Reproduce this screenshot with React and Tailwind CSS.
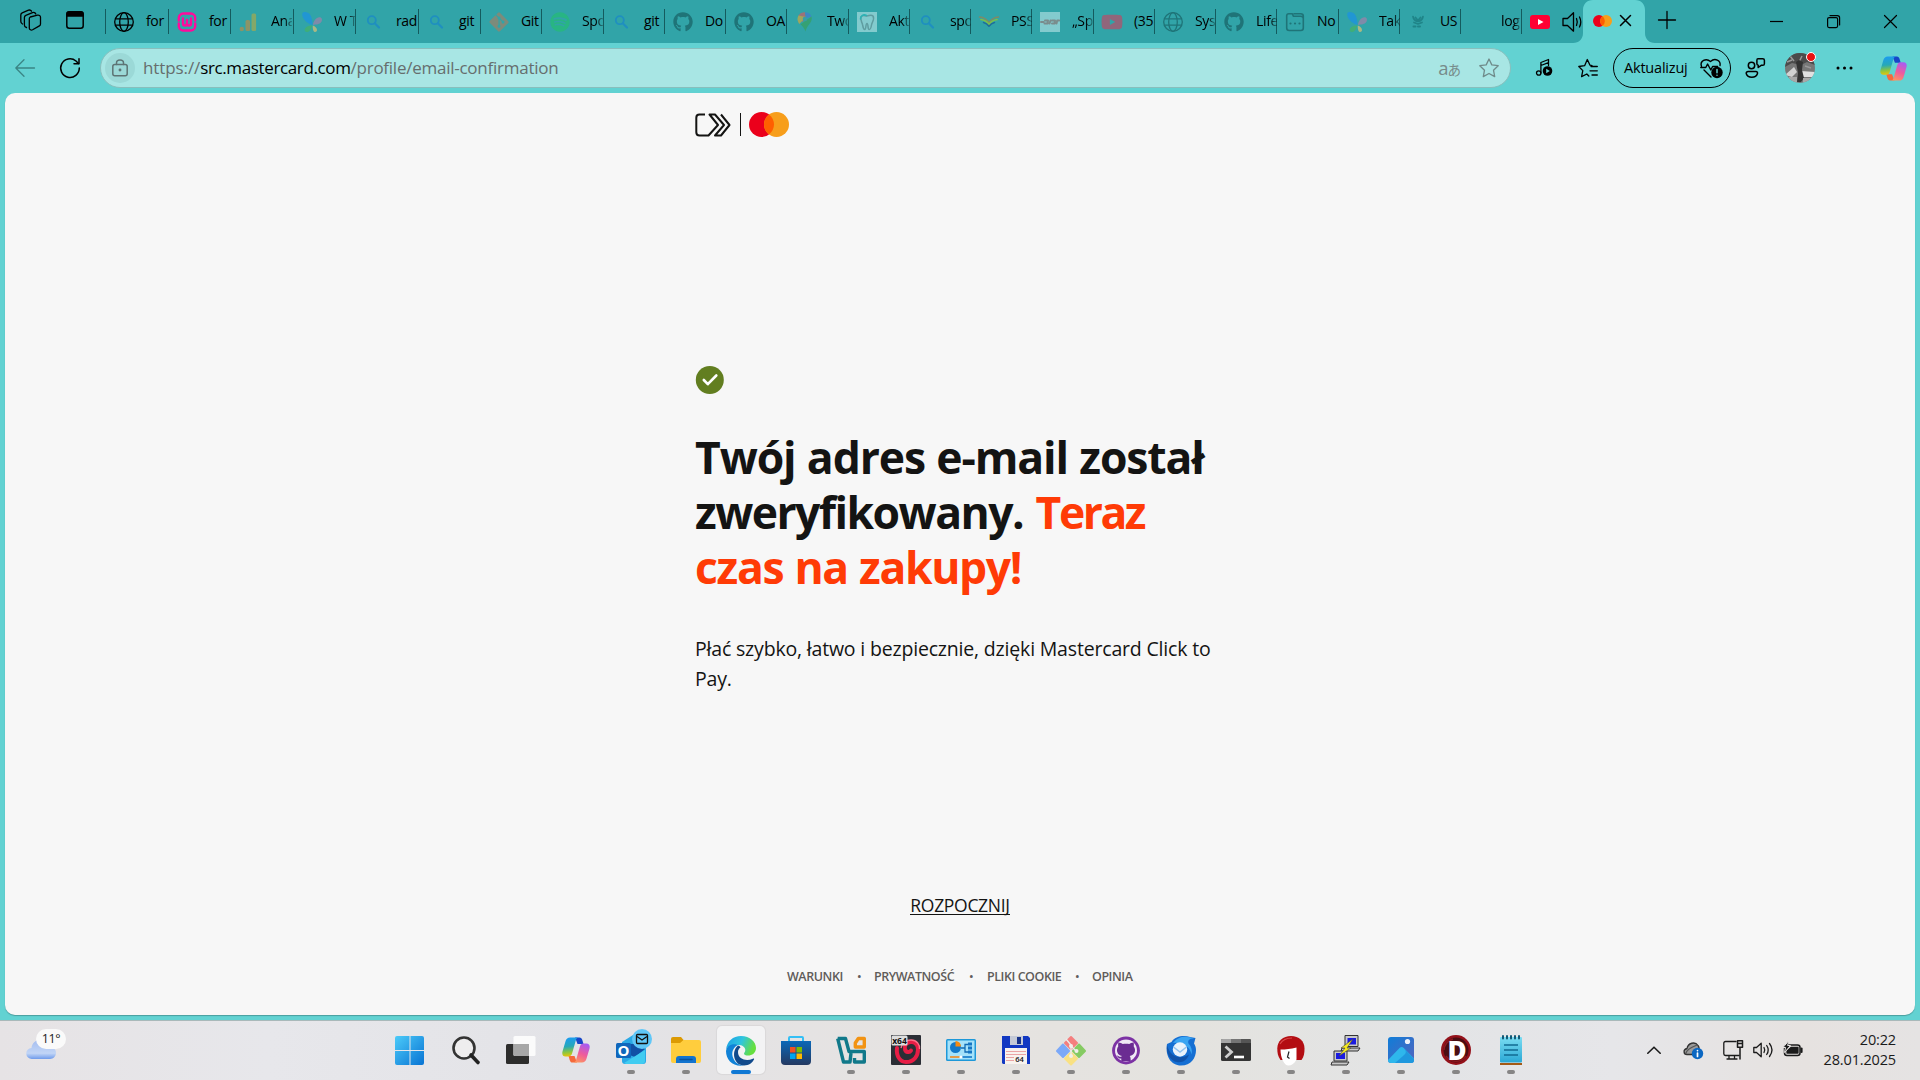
import React from "react";
import { FaGithub, FaGitAlt, FaSpotify, FaYoutube } from "react-icons/fa";

const SEGOE = "font-['Segoe_UI','Open_Sans','Noto_Sans_CJK_JP',sans-serif]";

function Svg({ w = 20, h = 20, vb, className = "", children }) {
  return (
    <svg
      width={w}
      height={h}
      viewBox={vb || `0 0 ${w} ${h}`}
      fill="none"
      stroke="currentColor"
      strokeWidth="1.3"
      strokeLinecap="round"
      strokeLinejoin="round"
      className={`shrink-0 overflow-visible ${className}`}
    >
      {children}
    </svg>
  );
}

/* ---------- favicons ---------- */

const Globe = ({ className }) => (
  <Svg className={className}>
    <circle cx="10" cy="10" r="9.3" />
    <ellipse cx="10" cy="10" rx="4.3" ry="9.3" />
    <path d="M1.5 6.8h17M1.5 13.2h17" />
  </Svg>
);

const Wamp = () => (
  <Svg>
    <g stroke="#ff0a9c" strokeWidth="2.400">
      <path d="M1.800 8.500V6a4.500 4.500 0 0 1 4.500-4.500h7.400A4.500 4.500 0 0 1 18.200 6v2.500M18.200 11.500V14a4.500 4.500 0 0 1-4.500 4.500H6.300A4.500 4.500 0 0 1 1.800 14v-2.500" />
      <path d="M6 6.500v5a2 2 0 0 0 4 0V8v3.500a2 2 0 0 0 4 0v-5" />
    </g>
  </Svg>
);

const Analytics = () => (
  <Svg>
    <g stroke="none">
      <rect x="12.500" y="1.500" width="4.600" height="17.500" rx="1.500" fill="#84a868" />
      <rect x="6.500" y="8" width="4.600" height="11" rx="1.500" fill="#8d9467" />
      <circle cx="2.800" cy="17" r="2.200" fill="#8d9467" />
    </g>
  </Svg>
);

const Butterfly = () => (
  <Svg>
    <g stroke="none">
      <path d="M10.500 13C4 11.500-.5 5.500.3 1.600.9-.7 6-.4 8.300 3c1.800 2.800 2.200 7 2.200 10z" fill="#2196d3" />
      <path d="M11 13c.2-4 3.200-7.600 6.300-7.800 2.700-.1 3.400 2.500 2 4.800-1.600 2.400-5 2.400-8.300 3z" fill="#7f8ba9" />
      <path d="M10.200 13.500c-3 .2-6.200 1-7.300 3.300-.9 2 .3 3.500 2.400 3.200 2.700-.4 4.300-3.600 4.900-6.500z" fill="#3fae78" />
      <path d="M10.800 13.500c2.400.8 4.400 2.800 4.200 4.800-.2 1.700-2 2.200-3.100 1.100-1.200-1.300-1.200-3.700-1.100-5.900z" fill="#a9b883" />
    </g>
  </Svg>
);

const Search = () => (
  <Svg className="text-[#1f8fc0]">
    <circle cx="7.800" cy="8.200" r="4" strokeWidth="1.800" />
    <path d="m11 11.500 4 4" strokeWidth="2.200" />
  </Svg>
);

const Pin = () => (
  <Svg>
    <g stroke="none">
      <path d="M3.500 3.500A7.500 7.500 0 0 1 10 .2l1 5.800-3.500 4z" fill="#9b7379" />
      <path d="M10 .2c3 0 5.500 1.500 6.500 4.300L11 6.500z" fill="#3d87c4" />
      <path d="M3.500 3.500c-1.800 3-.9 6.200.8 8.500L11 5z" fill="#9fa65d" />
      <path d="M16.500 4.500c1.500 6.500-4.500 7.500-6 15-1-3-2.500-5-5-7.300z" fill="#35a174" />
      <circle cx="10" cy="7" r="2.300" fill="#379ea5" />
    </g>
  </Svg>
);

const Tooth = () => (
  <Svg>
    <rect width="20" height="20" fill="#83cbce" stroke="none" />
    <path d="M4 5c2-3 4-1 6-1s4-2 6 0c2 3-1 6-1.500 9-.4 2.500-1 4.500-2.300 4.500-1.700 0-.7-6-2.200-6s-.7 6-2.200 6C6 17.500 6 14 5.500 12.500 5 10 3 8 4 5z" stroke="#5f9da0" strokeWidth="1.500" />
    <path d="M3.500 7c0-3.500 3-5 6-3.500" stroke="#2bb3b5" strokeWidth="1.600" />
  </Svg>
);

const Wings = () => (
  <Svg>
    <path d="M.6 5c3.500.3 7 2 9.400 6C12.400 7 16 5.300 19.400 5" stroke="#7d8b68" strokeWidth="1.700" />
    <path d="M2 7.500c3.500.5 6.200 2.300 8 5 1.800-2.700 4.500-4.500 8-5" stroke="#79c04a" strokeWidth="1.700" />
    <path d="M4.500 10.500c2.500.7 4.200 2 5.500 3.700 1.300-1.700 3-3 5.500-3.700" stroke="#1f6f9a" strokeWidth="1.500" />
  </Svg>
);

const GreyLogo = () => (
  <Svg>
    <rect width="20" height="20" fill="#83cbce" stroke="none" />
    <path d="M1 10h2.500M5 8.500h3l-.5 3h-3M9.500 11.500l1-3M12 8.500h3l-.5 3h-2.500M16.500 11.500l.7-3h2" stroke="#7a8c8c" strokeWidth="2" />
  </Svg>
);

const BoxPage = () => (
  <Svg className="text-[#1f7478]">
    <path d="M3.800 1.700h3.400l1.300 2.600h7.300c1.400 0 2.500.9 2.500 2.300v9.500c0 1.400-1 2.400-2.500 2.400H4.200c-1.400 0-2.500-1-2.500-2.400V3.800c0-1.200.9-2.100 2.100-2.100zM9 1.700h6.800c1.400 0 2.500.9 2.500 2.300v3" strokeWidth="1.600" />
    <path d="M5.500 11.500h.01M10 11.500h.01M14.500 11.500h.01" strokeWidth="2.200" />
  </Svg>
);

const Crest = () => (
  <Svg className="text-[#1f8488]">
    <path d="M5 4.500c.5 3 2.500 4.500 5 5 2.500-.5 4.500-2 5-5M7.500 5.500 10 8.500l2.500-3M6 10.500l4 1.500 4-1.500" strokeWidth="1.700" />
    <path d="M5.500 14.500h9" strokeWidth="2" strokeDasharray="2 2.500" />
  </Svg>
);

const Cards = ({ w, h }) => (
  <Svg w={w} h={h} vb="0 0 40 25">
    <g stroke="none">
      <circle cx="12.500" cy="12.500" r="12.500" fill="#eb001b" />
      <circle cx="27.500" cy="12.500" r="12.500" fill="#f79e1b" />
      <path d="M20 2.500a12.500 12.500 0 0 1 0 20 12.500 12.500 0 0 1 0-20z" fill="#ff5f00" />
    </g>
  </Svg>
);

const dim = "shrink-0 text-[#1f7478]";
const TABS = [
  ["w-[63px]", <Globe />, "for", false],
  ["w-[62px]", <Wamp />, "for", false],
  ["w-[63px]", <Analytics />, "Ana", true],
  ["w-[62px]", <Butterfly />, "W T", true],
  ["w-[63px]", <Search />, "rad", false],
  ["w-[62px]", <Search />, "git", false],
  ["w-[61px]", <FaGitAlt size={22} className="-mx-px shrink-0 text-[#7d8b7b]" />, "Git", false],
  ["w-[62px]", <FaSpotify size={20} className="shrink-0 text-[#28b583]" />, "Spo", true],
  ["w-[61px]", <Search />, "git", false],
  ["w-[61px]", <FaGithub size={20} className={dim} />, "Do", false],
  ["w-[61px]", <FaGithub size={20} className={dim} />, "OA", false],
  ["w-[62px]", <Pin />, "Two", true],
  ["w-[61px]", <Tooth />, "Akt", true],
  ["w-[61px]", <Search />, "spo", true],
  ["w-[61px]", <Wings />, "PSS", true],
  ["w-[62px]", <GreyLogo />, "„Sp", true],
  ["w-[61px]", <FaYoutube size={22} className="-mx-px shrink-0 text-[#90667b]" />, "(35", false],
  ["w-[61px]", <Globe className="text-[#1f7478]" />, "Sys", true],
  ["w-[61px]", <FaGithub size={20} className={dim} />, "Life", true],
  ["w-[62px]", <BoxPage />, "No", false],
  ["w-[61px]", <Butterfly />, "Tak", true],
  ["w-[61px]", <Crest />, "US", false],
  ["w-[61px]", <span className="w-5 shrink-0" />, "log", true],
];

function Tab({ width, icon, label, fade }) {
  return (
    <div className={`flex h-[25px] shrink-0 items-center border-l border-[#145b5e] pl-2 ${width}`}>
      {icon}
      <span
        className={`-mt-[2px] ml-3 w-[21px] text-[14px] leading-[25px] tracking-[-0.35px] whitespace-nowrap ${
          fade ? "[mask-image:linear-gradient(to_right,black_65%,transparent_110%)]" : ""
        }`}
      >
        {label}
      </span>
    </div>
  );
}

function TabStrip() {
  return (
    <div className="flex h-[43px] items-start bg-[#31a4a8] text-black">
      <div className="flex h-10 w-[105px] shrink-0 items-center pl-5">
        <Svg w={22} h={22}>
          <path d="M10.200 7.500 17.500 5.700c1.500-.4 3 .6 3 2.100v6.700c0 .8-.4 1.500-1.100 1.900l-6.800 3.900c-1.500.8-3.300-.2-3.300-1.900V9.200c0-.8.300-1.400.9-1.700z" transform="translate(0 .5)" />
          <path d="M6.500 18.500c-1.400-.3-2.100-1.200-2.100-2.600V8.500c0-1 .5-1.800 1.400-2.200L12.500 3.600c1.400-.5 2.800 0 3.300 1.400" />
          <path d="M2.500 15C1.500 14.500.8 13.500.8 12.200V6c0-1 .5-1.800 1.400-2.200L8.500 1.200c1.200-.4 2.400 0 3 1" />
        </Svg>
        <Svg w={18} h={18} className="ml-6">
          <rect x=".8" y=".8" width="16.400" height="16.400" rx="2.500" strokeWidth="1.500" />
          <path d="M1 5V3a2 2 0 0 1 2-2h12a2 2 0 0 1 2 2v2z" fill="currentColor" />
        </Svg>
      </div>
      <div className="flex h-[43px] shrink-0 items-start pt-[9px]">
        {TABS.map(([width, icon, label, fade], i) => (
          <Tab key={i} width={width} icon={icon} label={label} fade={fade} />
        ))}
        <div className="flex h-[25px] w-[62px] items-center border-l border-[#145b5e] pl-[7px]">
          <Svg w={22} h={22}>
            <rect x="1" y="4" width="20" height="14" rx="3" fill="#ff0033" stroke="none" />
            <path d="m9 8 5.500 3L9 14z" fill="white" stroke="none" />
          </Svg>
          <Svg w={20} h={20} className="ml-[11px]">
            <path d="M1 6.500h4.500L11.500.8v18.400l-6-5.700H1z" />
            <path d="M14.500 6.500c1 2.300 1 4.700 0 7M17.500 5c1.700 3.300 1.700 6.700 0 10" />
          </Svg>
        </div>
      </div>
      <div className="relative flex h-[43px] w-[62px] shrink-0 items-start text-black">
        <svg width="82" height="43" viewBox="0 0 82 43" className="absolute top-0 -left-[10px]">
          <path d="M0 43c6 0 10-4 10-10V10C10 4 14 0 20 0h42c6 0 10 4 10 10v23c0 6 4 10 10 10z" fill="#62d2d2" />
        </svg>
        <div className="relative flex h-[41px] items-center pl-[10px]">
          <Cards w={19} h={12} />
          <Svg w={11} h={11} className="ml-2">
            <path d="m.5.5 10 10M10.500.5l-10 10" strokeWidth="1.500" />
          </Svg>
        </div>
      </div>
      <div className="flex h-[39px] flex-1 items-center pl-[13px]">
        <Svg w={18} h={18}>
          <path d="M9 .5v17M.5 9h17" />
        </Svg>
        <div className="mt-[3px] ml-auto flex items-center gap-[44px] pr-[23px]">
          <Svg w={13} h={13}>
            <path d="M0 6.500h13" strokeWidth="1.200" strokeLinecap="butt" />
          </Svg>
          <Svg w={13} h={13}>
            <rect x=".6" y="2.600" width="10" height="10" rx="1.500" strokeWidth="1.200" />
            <path d="M3 .6h7.400c1.200 0 2.200 1 2.200 2.200V10" strokeWidth="1.200" />
          </Svg>
          <Svg w={13} h={13}>
            <path d="m.5.5 12 12M12.500.5l-12 12" strokeWidth="1.200" />
          </Svg>
        </div>
      </div>
    </div>
  );
}

/* ---------- toolbar ---------- */

function CopilotLogo({ size, id }) {
  return (
    <svg width={size} height={size} viewBox="0 0 28 28" className="shrink-0">
      <defs>
        <linearGradient id={`${id}a`} x1="4" y1="2" x2="6" y2="21" gradientUnits="userSpaceOnUse">
          <stop offset="0" stopColor="#1b9cf0" />
          <stop offset=".45" stopColor="#26a8b8" />
          <stop offset=".75" stopColor="#8cc63f" />
          <stop offset="1" stopColor="#f5c400" />
        </linearGradient>
        <linearGradient id={`${id}b`} x1="23" y1="8" x2="15" y2="27" gradientUnits="userSpaceOnUse">
          <stop offset="0" stopColor="#a95cf0" />
          <stop offset=".5" stopColor="#ee5c9c" />
          <stop offset="1" stopColor="#ff9a5c" />
        </linearGradient>
      </defs>
      <path d="M13 1.500h4.500c1.600 0 2.300 1 2.800 2.600L21.500 8h-6z" fill="#1746c8" />
      <path d="M15 26.500h-4.500c-1.600 0-2.300-1-2.800-2.600L6.500 20h6z" fill="#f56a3c" />
      <path d="M8 1.500h8.500c-1.500.3-2.200 1.300-2.700 3l-3.600 12.600c-.6 2.200-1.700 3.400-4 3.400H3.500C.8 20.500-.2 18.300.5 15.500L3.600 5C4.300 2.800 5.700 1.500 8 1.500z" fill={`url(#${id}a)`} />
      <path d="M20 26.500h-8.500c1.500-.3 2.200-1.300 2.700-3l3.600-12.600c.6-2.200 1.700-3.400 4-3.400h2.700c2.700 0 3.700 2.200 3 5L24.400 23c-.7 2.200-2.100 3.500-4.400 3.500z" fill={`url(#${id}b)`} />
    </svg>
  );
}

function Avatar() {
  return (
    <div className="relative ml-5 h-[30px] w-[30px] shrink-0">
      <svg width="30" height="30" viewBox="0 0 30 30">
        <clipPath id="av"><circle cx="15" cy="15" r="15" /></clipPath>
        <g clipPath="url(#av)">
          <rect width="30" height="30" fill="#777" />
          <path d="M0 0h30v12l-8-3-6 3-9-2-7 4z" fill="#4b4b4b" />
          <path d="M5 3l4 5M2 9l5-2M17 3l-3 6M20 13l6 2" stroke="#999" strokeWidth="1.500" />
          <path d="M0 22l9-8 3 5-5 5z" fill="#d2d2d2" />
          <path d="M16 18l14 1v5H18z" fill="#e0e0e0" />
          <path d="M11 9l3-2 4 2-1 8 2 8-3 4h-4l1-9z" fill="#333" />
          <path d="M4 24h8v6H4zM18 25h9v5h-9z" fill="#a9a9a9" />
        </g>
      </svg>
      <span className="absolute -top-px right-[-1px] h-[10px] w-[10px] rounded-full border border-white bg-[#e81010]" />
    </div>
  );
}

function Toolbar() {
  return (
    <div className="flex h-[50px] items-center bg-[#62d2d2] text-black">
      <Svg w={20} h={18} className="ml-[15px] text-[#3a8585]">
        <path d="M19.500 9H.8M9 .8.8 9 9 17.200" />
      </Svg>
      <Svg className="ml-[25px]">
        <path d="M19.300 10A9.300 9.300 0 1 1 16 3l2.500 2.500" strokeWidth="1.500" />
        <path d="M19 .7v5h-5" strokeWidth="1.500" />
      </Svg>
      <div className="ml-5 flex h-10 w-[1411px] shrink-0 items-center rounded-full border border-[#88bfbd] bg-[#a8e6e4] pl-1 text-[#666e6e]">
        <span className="flex h-[30px] w-[30px] shrink-0 items-center justify-center rounded-full bg-[#9bd9d7]">
          <Svg w={16} h={18} className="text-[#5d7474]">
            <rect x=".8" y="5.500" width="14.400" height="11.300" rx="2" strokeWidth="1.500" />
            <path d="M4.500 5.500V4c0-4 7-4 7 0v1.500" strokeWidth="1.500" />
            <circle cx="8" cy="11" r=".8" fill="currentColor" />
          </Svg>
        </span>
        <span className="ml-2 text-[17px] leading-[30px] tracking-[-0.31px] whitespace-nowrap">
          <span className="tracking-[-0.1px]">https://</span>
          <span className="text-black tracking-[-0.37px]">src.mastercard.com</span>
          <span className="tracking-[-0.25px]">/profile/email-confirmation</span>
        </span>
        <span className="ml-auto flex items-baseline text-[#768b8a]">
          <span className="text-[18.500px] leading-[30px]">a</span>
          <span className="-ml-px font-['Noto_Sans_CJK_JP',sans-serif] text-[13.500px]">あ</span>
        </span>
        <Svg className="mr-[11px] ml-[18px] text-[#6f8b8a]">
          <path d="m10 1 2.800 5.900 6.400.8-4.700 4.500 1.200 6.400L10 15.500l-5.700 3.100 1.200-6.400L.8 7.700l6.400-.8z" />
        </Svg>
      </div>
      <Svg w={17} h={20} className="ml-[25px]">
        <circle cx="2.700" cy="15" r="2.200" />
        <path d="M4.900 15V4.500L12.500 1.500v6M4.900 7.500l7.600-2.800" />
        <circle cx="11.500" cy="13" r="4.800" fill="currentColor" stroke="none" />
        <path d="m10.200 10.800 3.600 2.200-3.600 2.200z" fill="#62d2d2" stroke="none" />
      </Svg>
      <Svg className="ml-[25px]">
        <path d="M10.800 18 8.800 16l-5.200 2.600 1.200-6L.8 8.500l5.800-.8L9.300 1.500 12 7.200l2 .4" />
        <path d="M13 8.500h6.300M12 12.800h7.300M14 17h5.300" />
      </Svg>
      <div className="ml-[15px] flex h-10 w-[118px] shrink-0 items-center rounded-full border border-black pl-[10px]">
        <span className="w-[64px] text-[14.500px] leading-5 tracking-[-0.2px]">Aktualizuj</span>
        <Svg w={24} h={22} className="ml-3">
          <path d="M1.500 9.500C-.5 4 6 .5 10.500 4.500 15 .5 21 3.500 20 8.500M4 13l7 7" strokeWidth="1.400" />
          <path d="M.8 10.500h5l1.800-3.500 3.200 6 1.800-3.500h5" strokeWidth="1.400" />
          <circle cx="17" cy="15.500" r="5.700" fill="currentColor" stroke="none" />
          <path d="M17 12.500v3.200M17 18.200v.1" stroke="#62d2d2" strokeWidth="1.500" />
        </Svg>
      </div>
      <Svg w={20} h={20} className="ml-[14px]">
        <circle cx="6.500" cy="7.500" r="3.200" strokeWidth="1.500" />
        <path d="M3.200 13.500h7.600c1.400 0 2 1 1.600 2.200-.7 2.200-3 3.500-5.600 3.500s-4.800-1.300-5.500-3.500c-.4-1.200.4-2.200 1.900-2.200z" strokeWidth="1.500" />
        <path d="M13 .7h4.700c1 0 1.700.7 1.700 1.600v3.400c0 1-.7 1.600-1.700 1.600h-1.500l-3 2.200V7.300c-1-.2-1.300-.8-1.300-1.600V2.300c0-1 .5-1.600 1.100-1.600z" strokeWidth="1.500" />
      </Svg>
      <Avatar />
      <Svg w={17} h={4} className="ml-[21px]">
        <path d="M2 2h.01M8.500 2h.01M15 2h.01" strokeWidth="3" />
      </Svg>
      <span className="ml-[27px]"><CopilotLogo size={27} id="tb" /></span>
    </div>
  );
}

/* ---------- page ---------- */

const Bullet = () => <span className="w-4 text-center text-[11px]">•</span>;

function Page() {
  return (
    <div className="mx-[5px] flex h-[922px] flex-col rounded-[10px] bg-[#f7f7f7] pt-[19px] text-[#141413] shadow-[0_1px_1px_rgba(0,0,0,0.25)]">
      <div className="ml-[690px] flex h-[25px] items-center">
        <Svg w={36} h={24}>
          <g stroke="#141413" strokeWidth="2" strokeLinecap="butt">
            <path d="M10 1.500H4.500c-2 0-3.200 1.200-3.200 3.200v14.600c0 2 1.200 3.200 3.200 3.200h9l9.500-10.500-8.500-10.500h5.500L29 12l-9 10.500h6L34.500 12 26 1.500" />
          </g>
        </Svg>
        <span className="ml-[9px] h-[23px] w-px bg-[#141413]" />
        <span className="ml-[8px]"><Cards w={40} h={25} /></span>
      </div>
      <div className="ml-[690px] pt-[229px]">
        <Svg w={28} h={28}>
          <circle cx="14.800" cy="14" r="14" fill="#627e20" stroke="none" />
          <path d="m8.800 14 4 4.200 8.500-8.700" stroke="white" strokeWidth="2.600" />
        </Svg>
      </div>
      <h1 className="mt-[35px] ml-[690px] text-[44.500px] leading-[55px] font-bold whitespace-nowrap">
        <span className="block tracking-[-1.1px] [word-spacing:0.8px]">Twój adres e-mail został</span>
        <span className="block tracking-[-1.55px] [word-spacing:2.500px]">
          zweryfikowany. <span className="text-[#ff3b06] tracking-[-2.500px]">Teraz</span>
        </span>
        <span className="block tracking-[-1.35px] text-[#ff3b06] [word-spacing:1px]">czas na zakupy!</span>
      </h1>
      <p className="mt-[40px] ml-[690px] text-[19.500px] leading-[30px] tracking-[-0.18px] whitespace-nowrap">
        Płać szybko, łatwo i bezpiecznie, dzięki Mastercard Click to
        <br />
        Pay.
      </p>
      <div className="mt-[203px] flex justify-center">
        <a className="border-b border-[#141413] text-[17.500px] leading-[17px] tracking-[-0.3px]">ROZPOCZNIJ</a>
      </div>
      <div className="mt-[52px] ml-[782px] flex items-center text-[12.500px] leading-5 font-semibold tracking-[-0.45px] whitespace-nowrap text-[#5f5c5a]">
        <span className="w-[64px]">WARUNKI</span>
        <Bullet />
        <span className="w-[96px] pl-[7px]">PRYWATNOŚĆ</span>
        <Bullet />
        <span className="w-[90px] pl-[8px]">PLIKI COOKIE</span>
        <Bullet />
        <span className="pl-[7px]">OPINIA</span>
      </div>
    </div>
  );
}

/* ---------- taskbar ---------- */

const Icon = ({ children }) => (
  <svg width="30" height="30" viewBox="0 0 30 30" className="overflow-visible">{children}</svg>
);

const WindowsLogo = () => (
  <Icon>
    <linearGradient id="wn" x1="0" y1="0" x2="1" y2="1"><stop stopColor="#4ccbf9" /><stop offset="1" stopColor="#0873d3" /></linearGradient>
    <path d="M1 0h12.500v14H-1V2a2 2 0 0 1 2-2zM14.500 0H26a2 2 0 0 1 2 2v12H14.500zM-1 15h14.500v14H1a2 2 0 0 1-2-2zM14.500 15H28v12a2 2 0 0 1-2 2H14.500z" fill="url(#wn)" />
  </Icon>
);
const SearchGlass = () => (
  <Icon>
    <circle cx="13" cy="12" r="10.500" fill="#eeedee" stroke="#333" strokeWidth="2.600" />
    <path d="m20 19 7 7.500" stroke="#222" strokeWidth="3.600" strokeLinecap="round" />
  </Icon>
);
const TaskView = () => (
  <Icon>
    <rect x="0" y="8" width="23" height="20" rx="1.500" fill="#2d2d2c" />
    <rect x="7.500" y="0" width="22" height="20" rx="1.500" fill="#fbfbfb" />
    <path d="M7.500 8H23v12H9a1.500 1.500 0 0 1-1.500-1.500z" fill="#a7a7a7" />
  </Icon>
);
const Outlook = () => (
  <Icon>
    <path d="m6 6 11-7 13 9v17a3 3 0 0 1-3 3H9a3 3 0 0 1-3-3z" fill="#2ba9e6" />
    <path d="M6 8h14l9 5-10 8-11-4z" fill="#1150a5" />
    <path d="M8 27 29 14v11a3 3 0 0 1-3 3H10z" fill="#41ccf1" />
    <rect x="0" y="7" width="15" height="15" rx="1.500" fill="#1067bc" />
    <text x="7.500" y="19.500" textAnchor="middle" fontSize="15" fontWeight="700" fill="white">O</text>
    <circle cx="26" cy="3" r="10" fill="#60c7f8" />
    <rect x="20.500" y="-1.500" width="11" height="9" rx="1" fill="none" stroke="#111" strokeWidth="1.300" />
    <path d="m21 .5 5 3.500 5-3.500" fill="none" stroke="#111" strokeWidth="1.300" />
  </Icon>
);
const Explorer = () => (
  <Icon>
    <path d="M0 3a2 2 0 0 1 2-2h8l3 3.500L10 7H0z" fill="#dc9a03" />
    <path d="M0 7h9l3.500-3H28a2 2 0 0 1 2 2v19a2 2 0 0 1-2 2H2a2 2 0 0 1-2-2z" fill="#ffcd3d" />
    <path d="M5 27v-4a3 3 0 0 1 3-3h14a3 3 0 0 1 3 3v4z" fill="#1374cf" />
    <path d="M9 23.500h12" stroke="#0b529b" strokeWidth="1.500" strokeLinecap="round" />
  </Icon>
);
const Edge = () => (
  <Icon>
    <linearGradient id="eg" x1="0" y1="0" x2="1" y2=".3"><stop stopColor="#1c9de5" /><stop offset=".55" stopColor="#2fc5df" /><stop offset="1" stopColor="#66df3f" /></linearGradient>
    <path d="M0 14C1 5 7 0 15 0c9 0 15 6 15 12 0 5-4 7.500-8 7.500-4 0-4.500-1.800-3.500-3 2-2.500.5-7-5.500-7.500C6 8.500 2 10 0 14z" fill="url(#eg)" />
    <path d="M0 15c1-5 6-8 12-6-4 2-6.500 6-5.500 11 1 5 5.500 9.500 11 9.500C7 31 0 24 0 15z" fill="#1182d7" />
    <path d="M12 9.500c-7 5.500-4.500 20 6 20 5 0 8.500-3 10-6 .5-1-.5-1.200-1.200-.8-6 3-14.800.8-14.800-6.700 0-2 1-3.500 2.500-4.500-.5-1.200-1.500-1.800-2.500-2z" fill="#114a8c" />
  </Icon>
);
const Store = () => (
  <Icon>
    <linearGradient id="st" x1="0" y1="0" x2="0" y2="1"><stop stopColor="#0b68b8" /><stop offset="1" stopColor="#243961" /></linearGradient>
    <path d="M8 5V2a1 1 0 0 1 1-1h12a1 1 0 0 1 1 1v3" fill="none" stroke="#34bff5" strokeWidth="2" />
    <path d="M0 5h30v20a4 4 0 0 1-4 4H4a4 4 0 0 1-4-4z" fill="url(#st)" />
    <path d="M9 11h5.500v5.500H9z" fill="#f25022" /><path d="M15.500 11H21v5.500h-5.500z" fill="#7fba00" />
    <path d="M9 17.500h5.500V23H9z" fill="#00a4ef" /><path d="M15.500 17.500H21V23h-5.500z" fill="#ffb900" />
  </Icon>
);
const VBox = () => (
  <Icon>
    <g fill="none" strokeWidth="3.400" strokeLinejoin="round">
      <path d="M1.700 2.500h7.800l3.500 13H28.300v10.500H18.500v-4" stroke="#11798a" />
      <path d="M1.700 2.500 7.500 26h6.500l1-9" stroke="#11798a" />
      <path d="M28.300 11h-9V7l3-4.500h6z" stroke="#f29313" />
    </g>
  </Icon>
);
const X64 = () => (
  <Icon>
    <rect y="-1" width="30" height="30" rx="1" fill="#2b2e35" />
    <path d="M6 12c-1 8 3 14 9 14 8 0 12-6 12-12.500C27 9 24 6 20 6c-5 0-7 4-6 7.500 1 3 4.500 3.500 6 1" fill="none" stroke="#e71d45" strokeWidth="4" strokeLinecap="round" />
    <path d="M10 12c1-5 5-8 10-8 6 0 9 5 8.500 9" fill="none" stroke="#ff6f87" strokeWidth="1.300" />
    <rect x=".5" y="-.5" width="16" height="10" rx="1.500" fill="#dedede" />
    <text x="8.500" y="8" textAnchor="middle" fontSize="8.500" fontWeight="700" fill="#111">x64</text>
  </Icon>
);
const Control = () => (
  <Icon>
    <rect y="3" width="30" height="22" rx="1.500" fill="#1e98d8" />
    <rect x="1.500" y="4.500" width="27" height="19" fill="#a5e2fa" />
    <circle cx="9.500" cy="11.500" r="5.500" fill="#1179c9" /><path d="M10 11V5.500a6 6 0 0 1 5.500 5.500z" fill="#f58a10" transform="translate(-.5 -.5)" />
    <path d="M15 12h4V8.500h3M19 12v4h3" fill="none" stroke="#116bb4" strokeWidth="1.300" />
    <path d="M22 6.500h4v3h-4zM22 10.500h4v3h-4zM22 14.500h4v3h-4z" fill="#1576c4" />
    <path d="M4 21h10" stroke="#f08b1f" strokeWidth="1.600" /><path d="M16 21h10" stroke="#1179c9" strokeWidth="1.600" /><circle cx="15" cy="21" r="1.600" fill="white" />
  </Icon>
);
const Floppy = () => (
  <Icon>
    <path d="M1 0h26l2 2v26H2l-1-1z" fill="#1238c2" />
    <path d="M9 0h13v9H9z" fill="#c5cad6" /><path d="M16 1h4v7h-4z" fill="#18348c" />
    <path d="M4 12h22v16H4z" fill="#f8f3ee" />
    <path d="M5 15.500h20M5 18.500h20M5 21.500h8M5 24.500h8" stroke="#eaa5a5" strokeWidth="1.200" />
    <text x="18.500" y="25.500" textAnchor="middle" fontSize="7.500" fontWeight="600" fill="#111">64</text>
  </Icon>
);
const GitColours = () => (
  <Icon>
    <g strokeLinejoin="round" strokeWidth="2">
      <path d="m15 1 6 6-6 6-6-6z" fill="#f47f7f" stroke="#f47f7f" />
      <path d="m7 8.500 6 6.500-6 6-6-6z" fill="#7ca9f8" stroke="#7ca9f8" />
      <path d="m23 8.500 6 6.500-6 6-6-6z" fill="#86cb63" stroke="#86cb63" />
      <path d="m15 16.500 6 6-6 6-6-6z" fill="#f9e183" stroke="#f9e183" />
    </g>
    <path d="m10 3 5 6v12M15 10l5 5" fill="none" stroke="#ececec" strokeWidth="1.400" />
    <circle cx="15" cy="10" r="2" fill="#f1efeb" /><circle cx="15" cy="20" r="2" fill="#f1efeb" /><circle cx="20.500" cy="15" r="2" fill="#f1efeb" />
  </Icon>
);
const GitHubDesktop = () => (
  <Icon>
    <circle cx="15" cy="14.500" r="13.900" fill="#7c32a4" /><circle cx="15" cy="14.500" r="11" fill="#f0e8f5" />
    <path d="M7.500 6.500c2 0 3.200.8 4.200 1.600 2-.5 4.600-.5 6.600 0 1-.8 2.200-1.600 4.200-1.600.6 1.700.4 3 .2 3.700 3 4.600.6 9-4 9.800.8 1 1 2 1 5h-9.400v-2.500c-3.300.5-3.300-2.300-5-3 2-.5 2.700 1.800 5 1.200.1-.3.300-.6.600-.8-4.400-.8-6.500-5.500-3.600-9.700-.2-.8-.4-2 .2-3.700z" fill="#6b2c92" />
  </Icon>
);
const Thunderbird = () => (
  <Icon>
    <path d="M1 8C-1 20 5 29.500 15 29.500S30 22 30 14c0-3-1-5-2-6.500L29.500 2 24 1C18-1 9 0 5.500 6z" fill="#156fd3" />
    <path d="M7 7c6-8 14-7 21-4.500-5 0-6.500 2-5.500 5 3 3 4 7 3 11C24 10 15 6 7 7z" fill="#3aa5f2" />
    <circle cx="14" cy="13.500" r="7.200" fill="#e9f3fc" />
    <path d="m7.500 11 6.500 5 6.500-5" fill="none" stroke="#93c3ef" strokeWidth="1.500" />
    <path d="M1 9c3 12 13 15 22 9.500-2 6-7 8.500-12 7.500C5 25 0 19 1 9z" fill="#1053aa" />
  </Icon>
);
const Terminal = () => (
  <Icon>
    <rect y="3" width="30" height="22" rx="1.500" fill="#343434" />
    <path d="M1.500 3H10v4H0V4.500A1.500 1.500 0 0 1 1.500 3z" fill="#a5a5a5" /><path d="M10 3h10v4H10z" fill="#757575" /><path d="M20 3h8.500A1.500 1.500 0 0 1 30 4.500V7H20z" fill="#555" />
    <path d="m4.500 10.500 6 5.500-6 5.500" fill="none" stroke="#cfcfcf" strokeWidth="2.800" /><path d="M13 21h10" stroke="white" strokeWidth="2.600" />
  </Icon>
);
const RedHair = () => (
  <Icon>
    <path d="M15 0c8 0 13.500 5 13.500 12.500 0 5-.5 8-3 11.500h-21C2 20.500 1.300 17 1.300 12.500 1.300 5 7 0 15 0z" fill="#b30d12" />
    <path d="M4.500 13.500c5.500 0 10-.6 16-2v12c-2 4-5 6-8 6-4.500 0-8-8-8-16z" fill="white" />
    <path d="M13 15.500 11.500 21l2 1.500" fill="none" stroke="#222" strokeWidth="1.200" />
    <path d="M4 8c3-5 8-6 12-6" fill="none" stroke="#d94a4a" strokeWidth="1.200" />
  </Icon>
);
const Putty = () => (
  <Icon>
    <path d="M14-.5h13v11h-13zM11 12h18l-2 3H10z" fill="#c9c9c9" stroke="#333" /><path d="M16.500 2h8.500v6.500h-8.500z" fill="#1b1be0" />
    <path d="M3 15h13v10H3zM1 26h17l-2 3H0z" fill="#c9c9c9" stroke="#333" /><path d="M5 17h9v6H5z" fill="#1b1be0" />
    <path d="m22 3-12 9h4l-6 8 12-8h-4z" fill="#f5ea1d" stroke="#444" strokeWidth=".6" />
  </Icon>
);
const Photos = () => (
  <Icon>
    <linearGradient id="ph" x1="0" y1="0" x2="1" y2="1"><stop stopColor="#0f7dd8" /><stop offset="1" stopColor="#5663bd" /></linearGradient>
    <rect x="2" y="1" width="26" height="26" rx="3" fill="url(#ph)" />
    <path d="m2 24 11.500-12c1.300-1.300 3-1.300 4.300 0L28 22.500V24a3 3 0 0 1-3 3H5a3 3 0 0 1-3-3z" fill="#2eb7ec" />
    <path d="M28 23 18 12.500c3 3.500 2 5-1 7.500l-8 7h16a3 3 0 0 0 3-3z" fill="#1b8ed9" opacity=".75" />
    <circle cx="21.500" cy="5.500" r="2.600" fill="#eef3fb" />
  </Icon>
);
const DLogo = () => (
  <Icon>
    <circle cx="15" cy="14" r="15" fill="#94111a" /><circle cx="15" cy="14" r="12.500" fill="#4a0d12" />
    <path d="M3 14a12 12 0 0 1 9-11M5 20c5 7 15 7 20 0" fill="none" stroke="#8c1820" strokeWidth="1.500" />
    <text x="16" y="23.500" textAnchor="middle" fontSize="26" fontWeight="800" fill="white">D</text>
  </Icon>
);
const Notepad = () => (
  <Icon>
    <linearGradient id="np" x1="0" y1="0" x2="0" y2="1"><stop stopColor="#7adcf2" /><stop offset="1" stopColor="#2ba8d5" /></linearGradient>
    <path d="M4 27h22v2H4z" fill="#a45a16" /><rect x="4" y="1" width="22" height="25.500" rx="1" fill="url(#np)" />
    <path d="M7 0v2.500M11 0v2.500M15 0v2.500M19 0v2.500M23 0v2.500" stroke="#125875" strokeWidth="2" strokeLinecap="round" />
    <path d="M8 9h14M8 14h14M8 19h14" stroke="#126b92" strokeWidth="1.500" />
  </Icon>
);

const APPS = [
  [WindowsLogo, 0], [SearchGlass, 0], [TaskView, 0], [() => <CopilotLogo size={28} id="cp" />, 0],
  [Outlook, 1], [Explorer, 1], [Edge, 2], [Store, 0], [VBox, 1], [X64, 1], [Control, 1], [Floppy, 1],
  [GitColours, 1], [GitHubDesktop, 1], [Thunderbird, 1], [Terminal, 1], [RedHair, 1], [Putty, 1],
  [Photos, 1], [DLogo, 1], [Notepad, 1],
];

function AppButton({ Glyph, state }) {
  return (
    <div
      className={`flex h-12 w-12 flex-col items-center rounded-[5px] pt-[10px] ${
        state === 2 ? "bg-[#f3f3f4] shadow-[0_0_1px_1px_rgba(0,0,0,0.05)]" : ""
      }`}
    >
      <div className="flex h-[30px] w-[30px] items-start justify-center">
        <Glyph />
      </div>
      {state === 1 && <span className="mt-1 h-1 w-2 rounded-full bg-[#868585]" />}
      {state === 2 && <span className="mt-1 h-1 w-5 rounded-full bg-[#0f78d4]" />}
    </div>
  );
}

function Taskbar() {
  return (
    <div className="mt-[5px] flex h-[60px] border-t border-[#a9b9ba] bg-[linear-gradient(90deg,#e6e3e5_0%,#e7e7eb_14%,#e3e3e7_30%,#e6e3e1_48%,#e4e3df_62%,#e3e4e6_75%,#e6e6e9_84%,#e6e2e0_94%,#e5e3e3_100%)] text-[#1b1b1b]">
      <div className="relative h-full w-[387px] shrink-0">
        <svg width="30" height="20" viewBox="0 0 30 20" className="mt-[19px] ml-[26px]">
          <linearGradient id="cl" x1="0" y1="0" x2="0" y2="1"><stop stopColor="#a5bdf0" /><stop offset=".7" stopColor="#c1d5f6" /><stop offset="1" stopColor="#6f9beb" /></linearGradient>
          <path d="M6 19a5.500 5.500 0 0 1-.5-11C6 3 9.500 0 14 0c4 0 7 2.500 8 6.500 5 0 8 2.500 8 6.300 0 3.700-2.700 6.200-6 6.200z" fill="url(#cl)" />
        </svg>
        <span className="absolute top-[8px] left-[36px] flex h-5 w-[30px] items-center justify-center rounded-full bg-[#fafafa] text-[12.500px] tracking-[-0.4px]">11°</span>
      </div>
      <div className="flex gap-[7px] pt-[5px]">
        {APPS.map(([Glyph, state], i) => (
          <AppButton key={i} Glyph={Glyph} state={state} />
        ))}
      </div>
      <div className="ml-auto flex h-[58px] items-center pr-6">
        <Svg w={14} h={8}><path d="m.8 7.200 6.200-6 6.200 6" strokeWidth="1.600" /></Svg>
        <Svg w={20} h={18} className="ml-[22px]">
          <path d="M4 13.500C.5 13.500-.3 8.500 4 7.500 5 2 12 0 15 4.500c2 2.500 1 6-1 9z" fill="#9b9b9b" stroke="#333" strokeWidth="1.300" />
          <path d="M3 12c1-4 6-6 11-8" stroke="#555" strokeWidth="1.200" />
          <circle cx="14.500" cy="12.500" r="5.700" fill="#0b67c2" stroke="none" />
          <path d="M14.500 12v3.500M14.500 9.500v.1" stroke="white" strokeWidth="1.700" />
        </Svg>
        <Svg w={20} h={20} className="ml-5">
          <path d="M13 1.500H2.500c-1 0-1.700.7-1.700 1.700v10.600c0 1 .7 1.700 1.700 1.700h13.500M6 15.500v3.500M11.500 15.500v3.500M4 19h10" />
          <path d="M14.500.8h5v6.500h-5zM14.500 3.500h5M17 7.500V19" strokeWidth="1.500" />
        </Svg>
        <Svg w={20} h={18} className="ml-[10px]">
          <path d="M.8 6.500h2.700L8.200 2.200v13.600l-4.700-4.300H.8z" />
          <path d="M11 6.500c1 1.700 1 3.300 0 5M13.700 4.500c2 3 2 6 0 9M16.500 2.500c3.300 4.300 3.300 8.700 0 13" />
        </Svg>
        <Svg w={20} h={16} className="ml-[10px]">
          <rect x="1.500" y="3" width="15.500" height="10.500" rx="2.500" strokeWidth="1.500" />
          <path d="M8 5.500h7V11H4V9z" fill="currentColor" />
          <path d="M18.500 6.500v3.500" strokeWidth="2.200" />
          <path d="M5.500-1 0 5.500h2.500L1.500 10.500 7.500 3.500H5z" fill="currentColor" stroke="#e6e3e2" strokeWidth="1" />
        </Svg>
        <div className="ml-5 w-[73px] text-right text-[14.500px] leading-5 tracking-[-0.15px] whitespace-nowrap">
          20:22
          <br />
          28.01.2025
        </div>
      </div>
    </div>
  );
}

export default function App() {
  return (
    <div className={`h-[1080px] w-[1920px] overflow-hidden bg-[#62d2d2] ${SEGOE}`}>
      <TabStrip />
      <Toolbar />
      <Page />
      <Taskbar />
    </div>
  );
}
